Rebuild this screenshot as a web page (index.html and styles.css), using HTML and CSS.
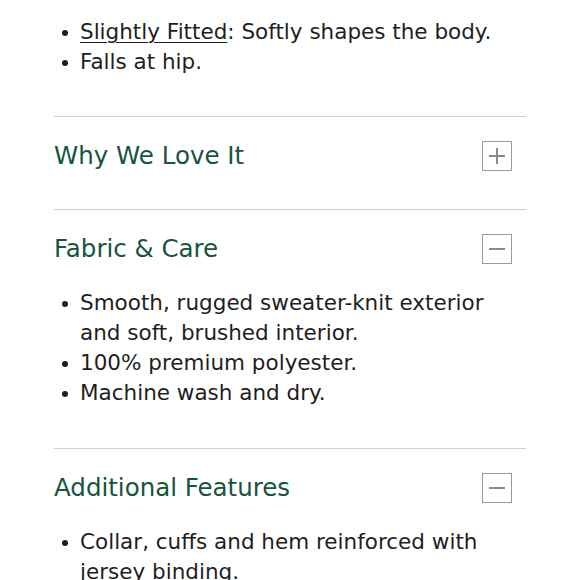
FILE: index.html
```html
<!DOCTYPE html>
<html>
<head>
<meta charset="utf-8">
<link rel="stylesheet" href="styles.css">
</head>
<body>
<div class="details">
  <ul class="list list-top">
    <li><span class="u">Slightly Fitted</span>: Softly shapes the body.</li>
    <li>Falls at hip.</li>
  </ul>
  <section class="acc">
    <div class="acc-head">
      <h2>Why We Love It</h2>
      <span class="toggle plus"></span>
    </div>
  </section>
  <section class="acc open">
    <div class="acc-head">
      <h2>Fabric &amp; Care</h2>
      <span class="toggle minus"></span>
    </div>
    <ul class="list">
      <li>Smooth, rugged sweater-knit exterior and soft, brushed interior.</li>
      <li>100% premium polyester.</li>
      <li>Machine wash and dry.</li>
    </ul>
  </section>
  <section class="acc open">
    <div class="acc-head">
      <h2>Additional Features</h2>
      <span class="toggle minus"></span>
    </div>
    <ul class="list">
      <li>Collar, cuffs and hem reinforced with jersey binding.</li>
    </ul>
  </section>
</div>
</body>
</html>
```
FILE: styles.css
```css
html, body { margin: 0; padding: 0; background: #fff; }
body { font-family: "DejaVu Sans", sans-serif; color: #1e1e1e; overflow: hidden; height: 580px; }
.details { margin-left: 54px; width: 472px; }
.list { margin: 0; padding: 0 30px 0 26px; list-style: none; font-size: 21.5px; line-height: 30px; }
.list li { position: relative; }
.list li::before { content: ""; position: absolute; left: -18px; top: 13px; width: 6px; height: 6px; border-radius: 50%; background: #1e1e1e; }
.list-top { padding-top: 17px; padding-bottom: 39px; }
.u { text-decoration: underline; text-underline-offset: 3px; text-decoration-thickness: 1px; }
.acc { border-top: 1px solid #d0d0d0; }
.acc-head { display: flex; align-items: center; justify-content: space-between; padding: 24px 14px 38px 0; }
.acc.open .acc-head { padding-bottom: 24px; }
.acc.open .list { padding-bottom: 40px; }
h2 { margin: 0; font-weight: normal; font-size: 24.5px; line-height: 30px; color: #15553d; }
.toggle { width: 28px; height: 28px; border: 1px solid #9a9a9a; position: relative; box-sizing: content-box; }
.toggle::before, .toggle::after { content: ""; position: absolute; background: #8a8a8a; }
.toggle::before { left: 6px; right: 6px; top: 13px; height: 2px; }
.plus::after { top: 6px; bottom: 6px; left: 13px; width: 2px; }
```
